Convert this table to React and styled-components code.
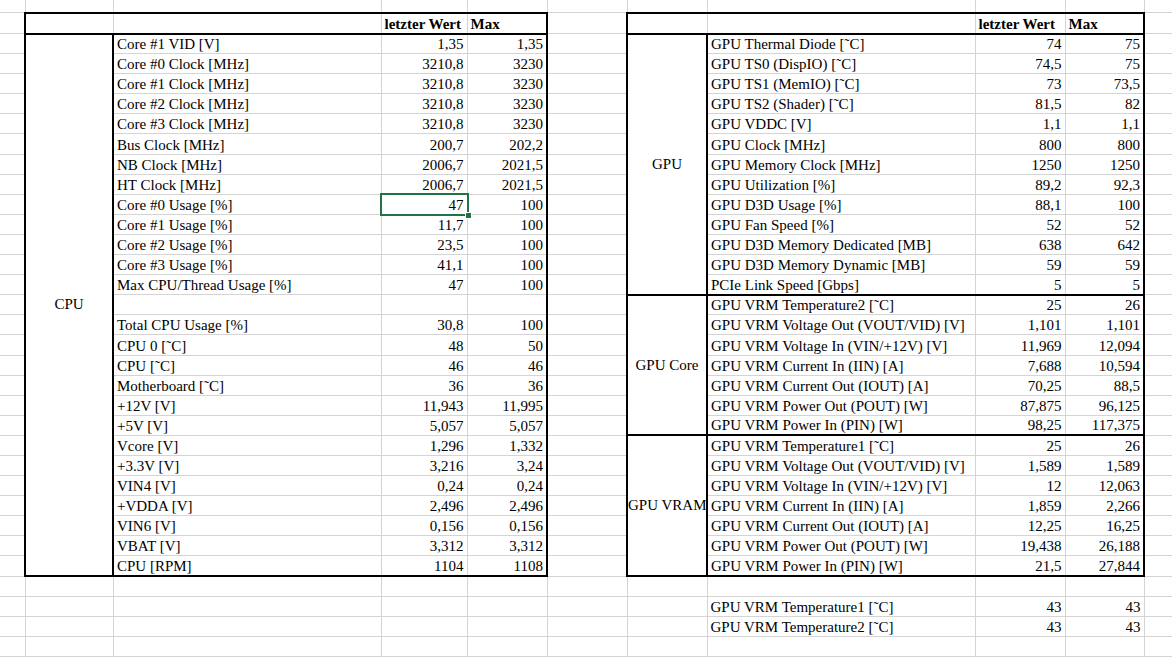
import React from "react";
import styled, { createGlobalStyle, css } from "styled-components";

const GlobalStyle = createGlobalStyle`
  html, body {
    margin: 0;
    padding: 0;
    background: #fff;
    overflow: hidden;
  }
`;

const GRID = "#d4d4d4";
const THICK = "2px solid #000";

// column widths of the sheet, A..K
const COLS = [25, 88, 268, 86, 80, 80, 80, 268, 90, 79, 60];

const Sheet = styled.table`
  border-collapse: collapse;
  table-layout: fixed;
  width: ${COLS.reduce((a, b) => a + b, 0)}px;
  font-family: "Liberation Serif", "Times New Roman", serif;
  font-size: 15px;
  line-height: 17px;
  color: #000;
`;

const Row = styled.tr`
  height: ${(p) => p.$h}px;
`;

const Cell = styled.td`
  position: relative;
  border: 1px solid ${GRID};
  padding: 0 3px;
  vertical-align: bottom;
  white-space: nowrap;
  overflow: ${(p) => (p.$sel ? "visible" : "hidden")};
  text-align: ${(p) => p.$align || "left"};
  font-weight: ${(p) => (p.$bold ? 700 : 400)};
  ${(p) => p.$first && css`border-top: none;`}
  ${(p) => p.$edge && css`border-left: none;`}
  ${(p) => p.$t && css`border-top: ${THICK};`}
  ${(p) => p.$r && css`border-right: ${THICK};`}
  ${(p) => p.$b && css`border-bottom: ${THICK};`}
  ${(p) => p.$l && css`border-left: ${THICK};`}
  ${(p) =>
    p.$label &&
    css`
      vertical-align: middle;
      text-align: center;
      padding: 0;
      overflow: visible;
    `}
`;

const Selection = styled.span`
  position: absolute;
  top: -2px;
  left: -2px;
  right: -2px;
  bottom: -2px;
  border: 2px solid #217346;
  pointer-events: none;
`;

const Handle = styled.span`
  position: absolute;
  right: -5px;
  bottom: -5px;
  width: 5px;
  height: 5px;
  background: #217346;
  border: 1px solid #fff;
`;

const cpuRows = [
  ["Core #1 VID [V]", "1,35", "1,35"],
  ["Core #0 Clock [MHz]", "3210,8", "3230"],
  ["Core #1 Clock [MHz]", "3210,8", "3230"],
  ["Core #2 Clock [MHz]", "3210,8", "3230"],
  ["Core #3 Clock [MHz]", "3210,8", "3230"],
  ["Bus Clock [MHz]", "200,7", "202,2"],
  ["NB Clock [MHz]", "2006,7", "2021,5"],
  ["HT Clock [MHz]", "2006,7", "2021,5"],
  ["Core #0 Usage [%]", "47", "100"],
  ["Core #1 Usage [%]", "11,7", "100"],
  ["Core #2 Usage [%]", "23,5", "100"],
  ["Core #3 Usage [%]", "41,1", "100"],
  ["Max CPU/Thread Usage [%]", "47", "100"],
  ["", "", ""],
  ["Total CPU Usage [%]", "30,8", "100"],
  ["CPU 0 [˜C]", "48", "50"],
  ["CPU [˜C]", "46", "46"],
  ["Motherboard [˜C]", "36", "36"],
  ["+12V [V]", "11,943", "11,995"],
  ["+5V [V]", "5,057", "5,057"],
  ["Vcore [V]", "1,296", "1,332"],
  ["+3.3V [V]", "3,216", "3,24"],
  ["VIN4 [V]", "0,24", "0,24"],
  ["+VDDA [V]", "2,496", "2,496"],
  ["VIN6 [V]", "0,156", "0,156"],
  ["VBAT [V]", "3,312", "3,312"],
  ["CPU [RPM]", "1104", "1108"],
];

const gpuRows = [
  ["GPU Thermal Diode [˜C]", "74", "75"],
  ["GPU TS0 (DispIO) [˜C]", "74,5", "75"],
  ["GPU TS1 (MemIO) [˜C]", "73", "73,5"],
  ["GPU TS2 (Shader) [˜C]", "81,5", "82"],
  ["GPU VDDC [V]", "1,1", "1,1"],
  ["GPU Clock [MHz]", "800", "800"],
  ["GPU Memory Clock [MHz]", "1250", "1250"],
  ["GPU Utilization [%]", "89,2", "92,3"],
  ["GPU D3D Usage [%]", "88,1", "100"],
  ["GPU Fan Speed [%]", "52", "52"],
  ["GPU D3D Memory Dedicated [MB]", "638", "642"],
  ["GPU D3D Memory Dynamic [MB]", "59", "59"],
  ["PCIe Link Speed [Gbps]", "5", "5"],
  ["GPU VRM Temperature2 [˜C]", "25", "26"],
  ["GPU VRM Voltage Out (VOUT/VID) [V]", "1,101", "1,101"],
  ["GPU VRM Voltage In (VIN/+12V) [V]", "11,969", "12,094"],
  ["GPU VRM Current In (IIN) [A]", "7,688", "10,594"],
  ["GPU VRM Current Out (IOUT) [A]", "70,25", "88,5"],
  ["GPU VRM Power Out (POUT) [W]", "87,875", "96,125"],
  ["GPU VRM Power In (PIN) [W]", "98,25", "117,375"],
  ["GPU VRM Temperature1 [˜C]", "25", "26"],
  ["GPU VRM Voltage Out (VOUT/VID) [V]", "1,589", "1,589"],
  ["GPU VRM Voltage In (VIN/+12V) [V]", "12", "12,063"],
  ["GPU VRM Current In (IIN) [A]", "1,859", "2,266"],
  ["GPU VRM Current Out (IOUT) [A]", "12,25", "16,25"],
  ["GPU VRM Power Out (POUT) [W]", "19,438", "26,188"],
  ["GPU VRM Power In (PIN) [W]", "21,5", "27,844"],
];

// merged group cells of the GPU table: start row -> [span, text]
const gpuGroups = { 0: [13, "GPU"], 13: [7, "GPU Core"], 20: [7, "GPU VRAM"] };
const gpuGroupEnds = [12, 19, 26];

const extraRows = [
  null,
  ["GPU VRM Temperature1 [˜C]", "43", "43"],
  ["GPU VRM Temperature2 [˜C]", "43", "43"],
  null,
];

const ROW_H = 20.1;

export default function App() {
  const last = cpuRows.length - 1;
  return (
    <>
      <GlobalStyle />
      <Sheet>
        <colgroup>
          {COLS.map((w, i) => (
            <col key={i} style={{ width: w }} />
          ))}
        </colgroup>
        <tbody>
          <Row $h={12.5}>
            {COLS.map((_, i) => (
              <Cell key={i} $first $edge={i === 0} />
            ))}
          </Row>

          <Row $h={21}>
            <Cell $edge />
            <Cell $t $b $l />
            <Cell $t $b />
            <Cell $t $b $bold>letzter Wert</Cell>
            <Cell $t $b $r $bold>Max</Cell>
            <Cell />
            <Cell $t $b $l />
            <Cell $t $b />
            <Cell $t $b $bold>letzter Wert</Cell>
            <Cell $t $b $r $bold>Max</Cell>
            <Cell />
          </Row>

          {cpuRows.map(([name, val, max], r) => {
            const [gName, gVal, gMax] = gpuRows[r];
            const group = gpuGroups[r];
            const gEnd = gpuGroupEnds.includes(r);
            const sel = r === 8;
            return (
              <Row key={r} $h={ROW_H}>
                <Cell $edge />
                {r === 0 && (
                  <Cell rowSpan={cpuRows.length} $label $l $r $b>
                    CPU
                  </Cell>
                )}
                <Cell $b={r === last}>{name}</Cell>
                <Cell $b={r === last} $align="right" $sel={sel}>
                  {val}
                  {sel && (
                    <Selection>
                      <Handle />
                    </Selection>
                  )}
                </Cell>
                <Cell $b={r === last} $r $align="right">
                  {max}
                </Cell>
                <Cell />
                {group && (
                  <Cell rowSpan={group[0]} $label $l $r $b>
                    {group[1]}
                  </Cell>
                )}
                <Cell $b={gEnd}>{gName}</Cell>
                <Cell $b={gEnd} $align="right">
                  {gVal}
                </Cell>
                <Cell $b={gEnd} $r $align="right">
                  {gMax}
                </Cell>
                <Cell />
              </Row>
            );
          })}

          {extraRows.map((row, i) => (
            <Row key={"x" + i} $h={ROW_H}>
              <Cell $edge />
              <Cell />
              <Cell />
              <Cell />
              <Cell />
              <Cell />
              <Cell />
              <Cell>{row ? row[0] : ""}</Cell>
              <Cell $align="right">{row ? row[1] : ""}</Cell>
              <Cell $align="right">{row ? row[2] : ""}</Cell>
              <Cell />
            </Row>
          ))}
        </tbody>
      </Sheet>
    </>
  );
}
